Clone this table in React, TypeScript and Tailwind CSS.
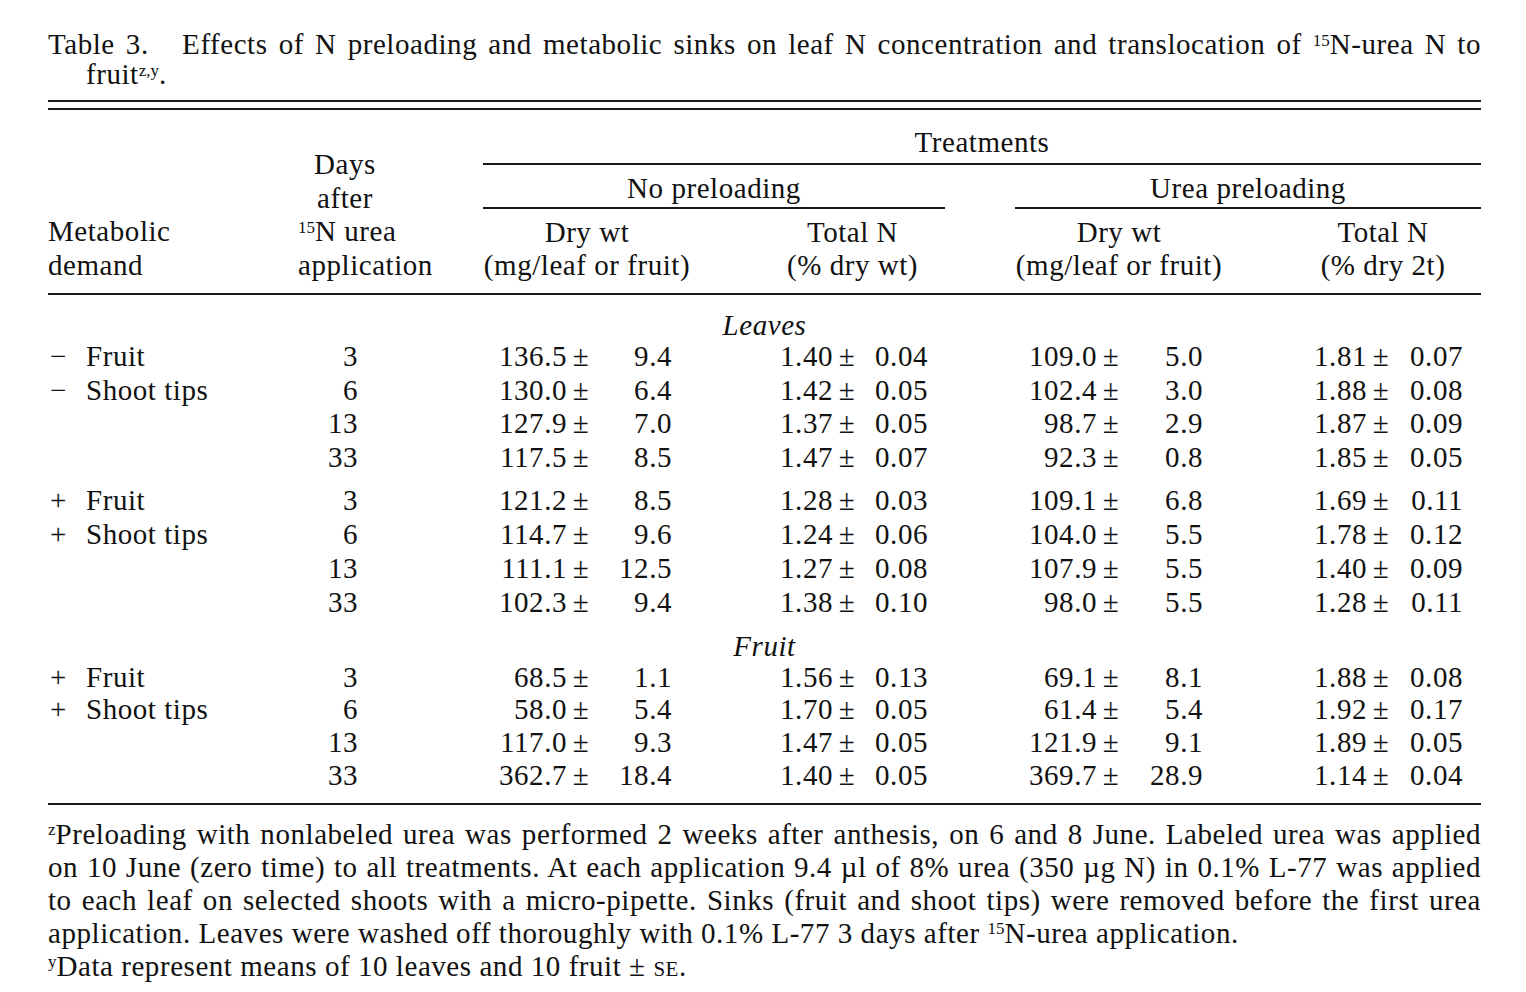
import React from 'react';

type Row = {
  sign?: string;
  label?: string;
  days: string;
  v: [string, string][];
};

const leavesA: Row[] = [
  { sign: '−', label: 'Fruit', days: '3', v: [['136.5', '9.4'], ['1.40', '0.04'], ['109.0', '5.0'], ['1.81', '0.07']] },
  { sign: '−', label: 'Shoot tips', days: '6', v: [['130.0', '6.4'], ['1.42', '0.05'], ['102.4', '3.0'], ['1.88', '0.08']] },
  { days: '13', v: [['127.9', '7.0'], ['1.37', '0.05'], ['98.7', '2.9'], ['1.87', '0.09']] },
  { days: '33', v: [['117.5', '8.5'], ['1.47', '0.07'], ['92.3', '0.8'], ['1.85', '0.05']] },
];

const leavesB: Row[] = [
  { sign: '+', label: 'Fruit', days: '3', v: [['121.2', '8.5'], ['1.28', '0.03'], ['109.1', '6.8'], ['1.69', '0.11']] },
  { sign: '+', label: 'Shoot tips', days: '6', v: [['114.7', '9.6'], ['1.24', '0.06'], ['104.0', '5.5'], ['1.78', '0.12']] },
  { days: '13', v: [['111.1', '12.5'], ['1.27', '0.08'], ['107.9', '5.5'], ['1.40', '0.09']] },
  { days: '33', v: [['102.3', '9.4'], ['1.38', '0.10'], ['98.0', '5.5'], ['1.28', '0.11']] },
];

const fruit: Row[] = [
  { sign: '+', label: 'Fruit', days: '3', v: [['68.5', '1.1'], ['1.56', '0.13'], ['69.1', '8.1'], ['1.88', '0.08']] },
  { sign: '+', label: 'Shoot tips', days: '6', v: [['58.0', '5.4'], ['1.70', '0.05'], ['61.4', '5.4'], ['1.92', '0.17']] },
  { days: '13', v: [['117.0', '9.3'], ['1.47', '0.05'], ['121.9', '9.1'], ['1.89', '0.05']] },
  { days: '33', v: [['362.7', '18.4'], ['1.40', '0.05'], ['369.7', '28.9'], ['1.14', '0.04']] },
];

// widths of mean / sd cells per treatment column
const meanW = ['w-[209px]', 'w-[161px]', 'w-[169px]', 'w-[164px]'];
const sdW = ['w-[80px]', 'w-[70px]', 'w-[81px]', 'w-[71px]'];

const DataRow = ({ row, h }: { row: Row; h: string }) => (
  <div className={`flex items-center whitespace-nowrap ${h}`}>
    <div className="w-[250px] flex pl-[2px]">
      {row.sign && <span className="w-[36px]">{row.sign}</span>}
      {row.label && <span>{row.label}</span>}
    </div>
    <div className="w-[60px] text-right">{row.days}</div>
    {row.v.map(([m, s], i) => (
      <React.Fragment key={i}>
        <div className={`${meanW[i]} text-right`}>{m}</div>
        <div className="w-[25px] pl-[3px] flex justify-center">±</div>
        <div className={`${sdW[i]} text-right`}>{s}</div>
      </React.Fragment>
    ))}
  </div>
);

const Group = ({ rows, h, className = '' }: { rows: Row[]; h: string; className?: string }) => (
  <div className={className}>
    {rows.map((r, i) => (
      <DataRow key={i} row={r} h={h} />
    ))}
  </div>
);

const Sup = ({ children }: { children: React.ReactNode }) => (
  <sup className="text-[17px] tracking-normal">{children}</sup>
);

const justifyLine = 'text-justify [text-align-last:justify] whitespace-nowrap';

export default function App() {
  return (
    <div className="min-h-screen bg-white text-[#111] font-['Liberation_Serif','Times_New_Roman',serif] text-[29px] tracking-[0.55px]">
      <div className="w-[1433px] ml-[48px] pt-[29px]">
        {/* caption */}
        <div className="leading-[30px]">
          <div className={justifyLine}>
            Table 3.&nbsp;&nbsp; Effects of N preloading and metabolic sinks on leaf N concentration and translocation of <Sup>15</Sup>N-urea N to
          </div>
          <div className="pl-[38px]">
            fruit<Sup>z,y</Sup>.
          </div>
        </div>

        {/* double rule */}
        <div className="mt-[11px] h-[2px] bg-[#1a1a1a]" />
        <div className="mt-[6px] h-[2px] bg-[#1a1a1a]" />

        {/* header */}
        <div className="grid grid-cols-[250px_94px_91px_998px] border-b-2 border-[#1a1a1a]">
          <div className="self-end pb-[11px] leading-[33.5px]">
            Metabolic
            <br />
            demand
          </div>
          <div className="self-end pb-[11px] leading-[33.5px] text-center whitespace-nowrap">
            Days
            <br />
            after
            <br />
            <Sup>15</Sup>N urea
            <br />
            application
          </div>
          <div />
          <div>
            <div className="pt-[16px] pb-[4px] leading-[33px] text-center border-b-2 border-[#1a1a1a]">Treatments</div>
            <div className="flex justify-between">
              <div className="w-[462px] pt-[7px] pb-[2px] leading-[33px] text-center border-b-2 border-[#1a1a1a]">No preloading</div>
              <div className="w-[466px] pt-[7px] pb-[2px] leading-[33px] text-center border-b-2 border-[#1a1a1a]">Urea preloading</div>
            </div>
            <div className="flex pt-[7px] pb-[11px] leading-[33px] text-center whitespace-nowrap">
              <div className="w-[208px]">
                Dry wt
                <br />
                (mg/leaf or fruit)
              </div>
              <div className="w-[185px] ml-[69px]">
                Total N
                <br />
                (% dry wt)
              </div>
              <div className="w-[208px] ml-[70px]">
                Dry wt
                <br />
                (mg/leaf or fruit)
              </div>
              <div className="w-[196px] ml-[62px]">
                Total N
                <br />
                (% dry 2t)
              </div>
            </div>
          </div>
        </div>

        {/* body */}
        <div className="border-b-2 border-[#1a1a1a] pb-[11px]">
          <div className="mt-[15px] leading-[30px] text-center italic">Leaves</div>
          <Group rows={leavesA} h="h-[33.5px]" />
          <Group rows={leavesB} h="h-[33.8px]" className="mt-[10px]" />
          <div className="mt-[12px] leading-[30px] text-center italic">Fruit</div>
          <Group rows={fruit} h="h-[32.7px]" />
        </div>

        {/* footnotes */}
        <div className="mt-[13px] leading-[33px]">
          <div className={justifyLine}>
            <Sup>z</Sup>Preloading with nonlabeled urea was performed 2 weeks after anthesis, on 6 and 8 June. Labeled urea was applied
          </div>
          <div className={justifyLine}>
            on 10 June (zero time) to all treatments. At each application 9.4 µl of 8% urea (350 µg N) in 0.1% L-77 was applied
          </div>
          <div className={justifyLine}>
            to each leaf on selected shoots with a micro-pipette. Sinks (fruit and shoot tips) were removed before the first urea
          </div>
          <div className="whitespace-nowrap">
            application. Leaves were washed off thoroughly with 0.1% L-77 3 days after <Sup>15</Sup>N-urea application.
          </div>
          <div className="whitespace-nowrap">
            <Sup>y</Sup>Data represent means of 10 leaves and 10 fruit ± <span className="text-[21px]">SE</span>.
          </div>
        </div>
      </div>
    </div>
  );
}
